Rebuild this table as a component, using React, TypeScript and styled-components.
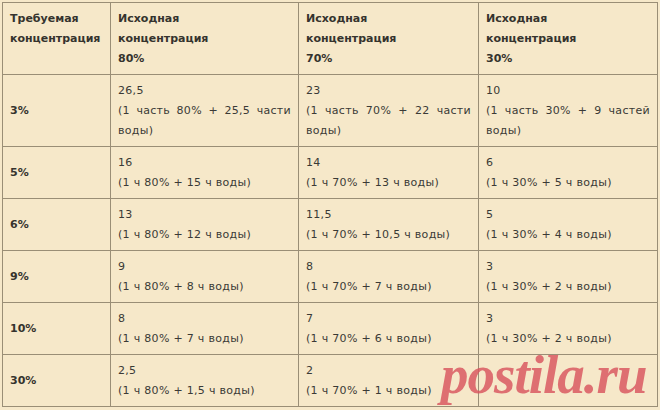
import React from "react";
import styled, { createGlobalStyle } from "styled-components";

const Global = createGlobalStyle`
  html, body { margin: 0; padding: 0; background: #f6e8c9; }
  body { font-family: "DejaVu Sans", Verdana, sans-serif; overflow: hidden; }
`;

const Page = styled.div`
  position: relative;
  width: 660px;
  height: 410px;
  overflow: hidden;
  padding: 2px 0 0 2px;
  box-sizing: border-box;
`;

const Table = styled.table`
  border-collapse: collapse;
  table-layout: fixed;
  width: 655px;
  background: #f6e8c9;
  border: 1px solid #5f5b4f;
  font-size: 11px;
  line-height: 20px;
  color: #3a3a36;
`;

const Col = styled.col<{ $w: number }>`
  width: ${(p) => p.$w}px;
`;

const HeadCell = styled.th`
  border: 1px solid #9a8e76;
  padding: 6px 7px 5px;
  text-align: left;
  vertical-align: top;
  font-weight: bold;
  color: #35332e;
`;

const RowHead = styled.td`
  border: 1px solid #9a8e76;
  padding: 6px 7px 5px;
  vertical-align: middle;
  font-weight: bold;
  color: #35332e;
`;

const Cell = styled.td`
  border: 1px solid #9a8e76;
  padding: 6px 7px 5px;
  vertical-align: top;
  text-align: justify;
  letter-spacing: 0.3px;
`;

const Watermark = styled.div`
  position: absolute;
  left: 441px;
  top: 347px;
  font-family: "Liberation Serif", serif;
  font-style: italic;
  font-weight: bold;
  font-size: 55px;
  line-height: 55px;
  letter-spacing: -1px;
  color: rgba(216, 84, 94, 0.82);
  pointer-events: none;
`;

type Row = { c: string; v: [string, string][] };

const rows: Row[] = [
  {
    c: "3%",
    v: [
      ["26,5", "(1 часть 80% + 25,5 части воды)"],
      ["23", "(1 часть 70% + 22 части воды)"],
      ["10", "(1 часть 30% + 9 частей воды)"],
    ],
  },
  {
    c: "5%",
    v: [
      ["16", "(1 ч 80% + 15 ч воды)"],
      ["14", "(1 ч 70% + 13 ч воды)"],
      ["6", "(1 ч 30% + 5 ч воды)"],
    ],
  },
  {
    c: "6%",
    v: [
      ["13", "(1 ч 80% + 12 ч воды)"],
      ["11,5", "(1 ч 70% + 10,5 ч воды)"],
      ["5", "(1 ч 30% + 4 ч воды)"],
    ],
  },
  {
    c: "9%",
    v: [
      ["9", "(1 ч 80% + 8 ч воды)"],
      ["8", "(1 ч 70% + 7 ч воды)"],
      ["3", "(1 ч 30% + 2 ч воды)"],
    ],
  },
  {
    c: "10%",
    v: [
      ["8", "(1 ч 80% + 7 ч воды)"],
      ["7", "(1 ч 70% + 6 ч воды)"],
      ["3", "(1 ч 30% + 2 ч воды)"],
    ],
  },
  {
    c: "30%",
    v: [
      ["2,5", "(1 ч 80% + 1,5 ч воды)"],
      ["2", "(1 ч 70% + 1 ч воды)"],
      ["", ""],
    ],
  },
];

const sources = ["80%", "70%", "30%"];

export default function App() {
  return (
    <>
      <Global />
      <Page>
        <Table>
          <colgroup>
            <Col $w={108} />
            <Col $w={188} />
            <Col $w={180} />
            <Col $w={179} />
          </colgroup>
          <thead>
            <tr>
              <HeadCell>
                Требуемая
                <br />
                концентрация
              </HeadCell>
              {sources.map((s) => (
                <HeadCell key={s}>
                  Исходная
                  <br />
                  концентрация
                  <br />
                  {s}
                </HeadCell>
              ))}
            </tr>
          </thead>
          <tbody>
            {rows.map((r) => (
              <tr key={r.c}>
                <RowHead>{r.c}</RowHead>
                {r.v.map(([n, t], i) => (
                  <Cell key={i}>
                    {n}
                    {n && <br />}
                    {t}
                  </Cell>
                ))}
              </tr>
            ))}
          </tbody>
        </Table>
        <Watermark>postila.ru</Watermark>
      </Page>
    </>
  );
}
